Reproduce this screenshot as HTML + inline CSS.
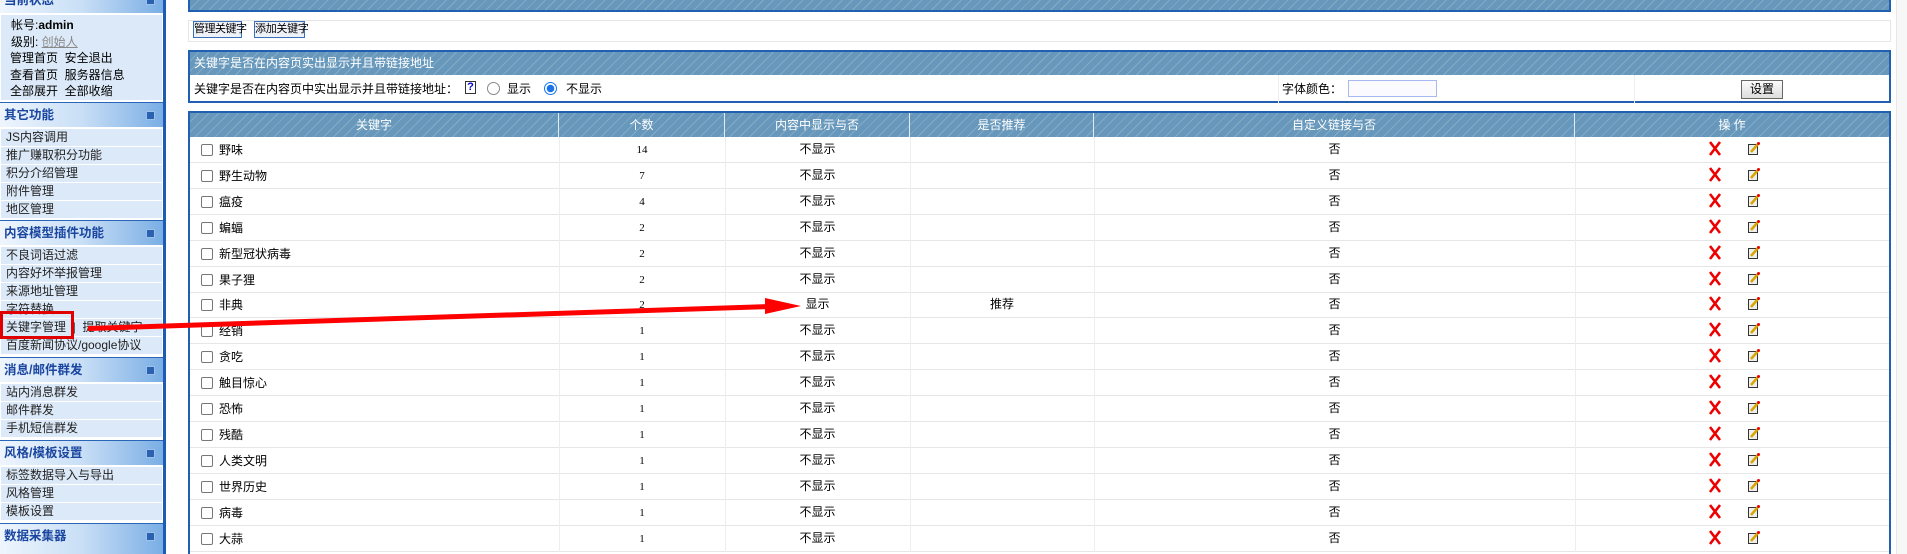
<!DOCTYPE html>
<html style="width:1907px;height:554px;overflow:hidden"><head><meta charset="utf-8">
<style>
*{margin:0;padding:0;box-sizing:border-box}
body{width:1907px;height:554px;overflow:hidden;background:#fff;font-family:"Liberation Sans","Noto Sans CJK SC",sans-serif;font-size:12px;color:#000;position:relative}
.a{position:absolute;white-space:nowrap}
.sb{left:0;top:0;width:166px;height:554px;background:#fff;border-right:3px solid #1d5cb4}
.hd{position:absolute;left:0;width:163px;height:25px;background:linear-gradient(90deg,#eef5fd 0%,#c9dff6 50%,#7aaee5 100%);border-top:1px solid #2a66b8;color:#1a46a0;font-weight:bold;font-size:12.5px;line-height:24px;padding-left:4px}
.hd i{position:absolute;right:8px;top:8px;width:9px;height:9px;background:#2a62b0;border:1px solid #9cc0ea}
.it{position:absolute;left:1px;width:161px;height:17px;background:#dce9f8;line-height:17px;padding-left:5px;font-size:12px;color:#222;white-space:nowrap}
.stripe{background:#6798bb repeating-linear-gradient(135deg,rgba(255,255,255,0) 0 6px,rgba(255,255,255,.18) 6px 7px)}
.box{border:2px solid #2160b0}
.th{position:absolute;top:0;height:24px;line-height:24px;color:#fff;text-align:center;border-right:1px solid #e0ebf3}
.row{position:absolute;left:0;width:1697px;height:26px;border-bottom:1px solid #e6e6e6}
.row span{position:absolute;top:0;line-height:27px;white-space:nowrap}
.cb{position:absolute;left:11px;top:7px;width:12px;height:12px;border:1px solid #777;border-radius:2px;background:#fff}
.c{text-align:center}
</style></head><body>
<div class="a sb">
 <div class="hd" style="top:-12px;border-top:none">当前状态<i></i></div>
 <div class="a" style="left:1px;top:15px;width:161px;height:85px;background:#dce9f8;padding:2px 0 0 10px;line-height:16.5px;font-size:12px">
  <div>帐号:<b>admin</b></div>
  <div>级别: <span style="color:#888;text-decoration:underline">创始人</span></div>
  <div style="margin-left:-1px">管理首页 &nbsp;安全退出</div>
  <div style="margin-left:-1px">查看首页 &nbsp;服务器信息</div>
  <div style="margin-left:-1px">全部展开 &nbsp;全部收缩</div>
 </div>
 <div class="hd" style="top:102px">其它功能<i></i></div>
 <div class="it" style="top:129px">JS内容调用</div>
 <div class="it" style="top:147px">推广赚取积分功能</div>
 <div class="it" style="top:165px">积分介绍管理</div>
 <div class="it" style="top:183px">附件管理</div>
 <div class="it" style="top:201px">地区管理</div>
 <div class="hd" style="top:220px">内容模型插件功能<i></i></div>
 <div class="it" style="top:247px">不良词语过滤</div>
 <div class="it" style="top:265px">内容好坏举报管理</div>
 <div class="it" style="top:283px">来源地址管理</div>
 <div class="it" style="top:301px">字符替换</div>
 <div class="it" style="top:319px">关键字管理 &nbsp;| &nbsp;提取关键字</div>
 <div class="it" style="top:337px">百度新闻协议/google协议</div>
 <div class="hd" style="top:357px">消息/邮件群发<i></i></div>
 <div class="it" style="top:384px">站内消息群发</div>
 <div class="it" style="top:402px">邮件群发</div>
 <div class="it" style="top:420px">手机短信群发</div>
 <div class="hd" style="top:440px">风格/模板设置<i></i></div>
 <div class="it" style="top:467px">标签数据导入与导出</div>
 <div class="it" style="top:485px">风格管理</div>
 <div class="it" style="top:503px">模板设置</div>
 <div class="hd" style="top:523px;height:31px">数据采集器<i></i></div>
</div>
<div class="a" style="left:0;top:311px;width:74px;height:28px;border:3px solid #e00000"></div>

<div class="a box stripe" style="left:188px;top:0;width:1703px;height:12px;border-top:0"></div>

<div class="a" style="left:188px;top:20px;width:1703px;height:22px;border:1px solid #e6e6e6"></div>
<div class="a" style="left:193px;top:21px;width:49px;height:17px;border:1px solid #3a70b8;background:#eef2f8;line-height:15px;text-align:center;font-size:11px;letter-spacing:-0.5px">管理关键字</div>
<div class="a" style="left:254px;top:21px;width:51px;height:17px;border:1px solid #3a70b8;background:#eef2f8;line-height:15px;text-align:center;font-size:11px;letter-spacing:-0.3px">添加关键字</div>

<div class="a box" style="left:188px;top:50px;width:1703px;height:53px">
 <div class="a stripe" style="left:0;top:0;width:1699px;height:23px;color:#fff;line-height:23px;padding-left:4px">关键字是否在内容页实出显示并且带链接地址</div>
 <div class="a" style="left:4px;top:28px">关键字是否在内容页中实出显示并且带链接地址：</div>
 <div class="a" style="left:275px;top:29px;width:11px;height:13px;border:1px solid #333;background:#fff;color:#00c;font-weight:bold;font-size:11px;line-height:11px;text-align:center">?</div>
 <div class="a" style="left:297px;top:30px;width:13px;height:13px;border:1px solid #888;border-radius:50%"></div>
 <div class="a" style="left:317px;top:28px">显示</div>
 <div class="a" style="left:354px;top:30px;width:13px;height:13px;border:1px solid #1a73e8;border-radius:50%;background:radial-gradient(circle,#1a73e8 0 3.5px,#fff 4px)"></div>
 <div class="a" style="left:376px;top:28px">不显示</div>
 <div class="a" style="left:1088px;top:23px;width:1px;height:28px;background:#eee"></div>
 <div class="a" style="left:1444px;top:23px;width:1px;height:28px;background:#eee"></div>
 <div class="a" style="left:1092px;top:28px">字体颜色：</div>
 <div class="a" style="left:1158px;top:28px;width:89px;height:17px;border:1px solid #a8b8f0;background:#fafaff"></div>
 <div class="a" style="left:1551px;top:28px;width:42px;height:19px;border:1px solid #666;background:linear-gradient(#fafafa,#ddd);text-align:center;line-height:17px">设置</div>
</div>

<div class="a box" style="left:188px;top:111px;width:1703px;height:443px;border-bottom:0;overflow:hidden">
 <div class="a stripe" style="left:0;top:0;width:1699px;height:24px"></div>
 <div class="th" style="left:0;width:369px">关键字</div>
 <div class="th" style="left:369px;width:166px">个数</div>
 <div class="th" style="left:535px;width:185px">内容中显示与否</div>
 <div class="th" style="left:720px;width:184px">是否推荐</div>
 <div class="th" style="left:904px;width:481px">自定义链接与否</div>
 <div class="th" style="left:1385px;width:314px;border:none">操 作</div>
 <div id="rows" class="a" style="left:0;top:24px;width:1699px;height:417px"></div>
</div>
<svg class="a" style="left:0;top:0" width="1907" height="554">
 <polygon points="88,326 770,304 770,309 88,331" fill="#f00"/>
 <polygon points="765,298 801,306 765,314" fill="#f00"/>
</svg>
<div class="a" style="left:1896px;top:0;width:11px;height:554px;background:#f7f7f7;border-left:1px solid #e8e8e8"></div>
<script>
var d=[["野味",14],["野生动物",7],["瘟疫",4],["蝙蝠",2],["新型冠状病毒",2],["果子狸",2],["非典",2],["经销",1],["贪吃",1],["触目惊心",1],["恐怖",1],["残酷",1],["人类文明",1],["世界历史",1],["病毒",1],["大蒜",1]];
var h="";
d.forEach(function(r,i){var t=i*25.9;var s=i==6;
h+='<div class="row" style="top:'+t+'px;width:1699px">'+
'<div style="position:absolute;left:369px;top:0;width:1px;height:26px;background:#eee"></div>'+
'<div style="position:absolute;left:535px;top:0;width:1px;height:26px;background:#eee"></div>'+
'<div style="position:absolute;left:720px;top:0;width:1px;height:26px;background:#eee"></div>'+
'<div style="position:absolute;left:904px;top:0;width:1px;height:26px;background:#eee"></div>'+
'<div style="position:absolute;left:1385px;top:0;width:1px;height:26px;background:#eee"></div>'+
'<div class="cb"></div><span style="left:29px">'+r[0]+'</span>'+
'<span class="c" style="left:369px;width:166px;font-family:Liberation Serif,serif;font-size:11px;line-height:27px">'+r[1]+'</span>'+
'<span class="c" style="left:535px;width:185px;line-height:25px">'+(s?'显示':'不显示')+'</span>'+
'<span class="c" style="left:720px;width:184px;line-height:25px">'+(s?'推荐':'')+'</span>'+
'<span class="c" style="left:904px;width:481px;line-height:25px">否</span>'+
'<svg style="position:absolute;left:1518px;top:4px" width="14" height="15"><path d="M2 1 L12 14 M12 1 L2 14" stroke="#e00" stroke-width="2.6"/></svg>'+
'<svg style="position:absolute;left:1558px;top:5px" width="12" height="13"><rect x="0.5" y="2.5" width="9" height="10" fill="#eee" stroke="#333"/><path d="M3 10 L10 2" stroke="#d9a500" stroke-width="2.5"/><circle cx="10.5" cy="1.5" r="1.5" fill="#e00"/></svg>'+
'</div>';});
document.getElementById("rows").innerHTML=h;
</script>
</body></html>
